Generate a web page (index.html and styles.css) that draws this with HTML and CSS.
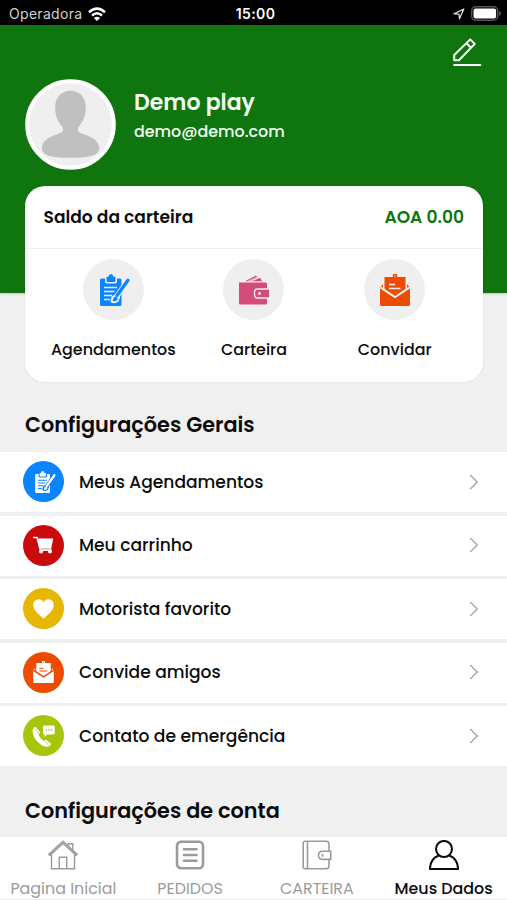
FILE: index.html
```html
<!DOCTYPE html>
<html lang="pt">
<head>
  <meta charset="UTF-8">
  <meta name="viewport" content="width=device-width, initial-scale=1.0">
  <title>Meus Dados</title>
  <link rel="stylesheet" href="styles.css">
</head>
<body>
  <!-- shared icons -->
  <svg class="sprite" width="0" height="0">
    <symbol id="icon-clipboard" viewBox="0 0 30 32">
      <path class="fill" d="M1.500 4.500h3.500v3.200q0 1.800 1.800 1.800h8.400q1.800 0 1.800-1.800V4.500h3q1.500 0 1.500 1.500v24.500q0 1.500-1.500 1.500H1.500Q0 32 0 30.500V6q0-1.500 1.500-1.500z"/>
      <path class="fill" d="M6.500 2.800h2Q9 0 11 0t2.500 2.800h2v4q0 1.200-1.200 1.200H7.700Q6.500 8 6.500 6.800z"/>
      <path class="hole-line" stroke-width="1.700" d="M4 13.500h13M4 17.500h10.500M4 21.500h8M4 25.500h6"/>
      <path class="hole-line" stroke-width="5.400" stroke-linecap="round" d="M27.800 6.500L16 23.500"/>
      <path class="hole-line" stroke-width="2" d="M16 21l-3.500 2-1 4.500q3.500 1.500 6-.5l1.500-3.500z"/>
      <path class="line" stroke-width="3.200" stroke-linecap="round" d="M28 6.200L17 21.500"/>
      <path class="fill" d="M15.500 22.500l2.500 2q-.5 2.500-5.500 2.500 1.500-1 1.200-2.500t1.800-2z"/>
    </symbol>
    <symbol id="icon-envelope" viewBox="0 0 30 32">
      <path class="fill" d="M4.500 3h8.300V.8q0-.8.800-.8h2.800q.8 0 .8.800V3h8.300v13.500L15 22.500 4.500 15.500z"/>
      <path class="fill" d="M3 10v5L.5 13.200zM27 10v5l2.500-1.800z"/>
      <path class="fill" d="M0 14.500l15 9.800 15-9.800v16q0 1.500-1.500 1.500h-27Q0 32 0 30.500z"/>
      <path class="hole-line" stroke-width="1.600" d="M1 13.500l14 9.300 14-9.300M9 10.500h6M9 14.500h11.500"/>
      <path class="hole-line" stroke-width="1" d="M14.300 2h1.400"/>
    </symbol>
    <symbol id="icon-chevron" viewBox="0 0 10 16">
      <path d="M1.200 1l7 7-7 7" fill="none" stroke="#a9a9a9" stroke-width="1.500"/>
    </symbol>
  </svg>

  <div class="status-bar">
    <div class="carrier">
      <span>Operadora</span>
      <svg width="18" height="14" viewBox="0 0 18 14" fill="none" stroke="#fff" stroke-width="2.500">
        <path d="M1 5.200Q9-2 17 5.200M4 8.500q5-4.400 10 0"/>
        <path d="M9 14l-3.100-3q3.100-2.500 6.200 0z" fill="#fff" stroke="none"/>
      </svg>
    </div>
    <div class="time">15:00</div>
    <div class="indicators">
      <svg width="12" height="12" viewBox="0 0 12 12" fill="none" stroke="#d8d8d8" stroke-width="1.300" stroke-linejoin="round">
        <path d="M1 5.800L10.800 1 6.500 10.800 6 6.200z"/>
      </svg>
      <svg width="31" height="15" viewBox="0 0 31 15">
        <rect x=".7" y=".7" width="26" height="13.600" rx="4" fill="none" stroke="#555" stroke-width="1.400"/>
        <rect x="2.500" y="2.500" width="22.600" height="10" rx="2" fill="#fff"/>
        <path d="M28 5q2 .6 2 2.500T28 10z" fill="#555"/>
      </svg>
    </div>
  </div>

  <header class="profile">
    <svg class="edit" width="29" height="29" viewBox="0 0 29 29" fill="none" stroke="#fff" stroke-width="2" stroke-linejoin="round" stroke-linecap="round">
      <path d="M1.200 22.300V17L17.200 1.400l4.600 4.500L6 22.300zM13.500 5.200l4.500 4.600"/>
      <path d="M1.200 27h26.200"/>
    </svg>
    <div class="user">
      <svg class="avatar" width="91" height="91" viewBox="0 0 92 92">
        <circle cx="46" cy="46" r="43.800" fill="#efefef" stroke="#fff" stroke-width="4"/>
        <path fill="#c0c0c0" d="M46 12c9 0 15.500 6.500 15.500 17 0 8-3 14.500-7 19-2 3-1 5.500 2 6.500 9 3.500 18 6.500 18.500 15 0 7.500-8 10.200-29 10.200s-29-2.700-29-10.200c.5-8.500 9.500-11.500 18.500-15 3-1 4-3.500 2-6.500-4-4.500-7-11-7-19C30.500 18.500 37 12 46 12z"/>
      </svg>
      <div class="user-info">
        <h1>Demo play</h1>
        <p>demo@demo.com</p>
      </div>
    </div>
  </header>

  <section class="wallet-card">
    <div class="balance">
      <span>Saldo da carteira</span>
      <span class="amount">AOA 0.00</span>
    </div>
    <div class="shortcuts">
      <div class="shortcut">
        <div class="circle blue"><svg class="clipboard" width="30" height="32"><use href="#icon-clipboard"/></svg></div>
        <span>Agendamentos</span>
      </div>
      <div class="shortcut">
        <div class="circle pink">
          <svg width="30" height="30" viewBox="0 0 30 30">
            <path class="fill" d="M6 6.300L16.500.8q.8-.3 1.200.4l.8 1.300L11 6.300zM13 6.300L20.500 3q.8-.3 1.200.5l1.300 2.800z"/>
            <path class="hole-line" stroke-width=".8" d="M8.500 6.500L18 2.300"/>
            <path class="fill" d="M0 7.500h26.500q1.500 0 1.500 1.500v19q0 1.500-1.500 1.500h-25Q0 29.500 0 28z"/>
            <rect x="15.500" y="14" width="15" height="9" rx="3" class="fill"/>
            <path class="hole-line" stroke-width="1.400" d="M28.500 14H18.500q-3 0-3 3v3q0 3 3 3h10"/>
            <circle cx="20.500" cy="18.500" r="1.500" class="hole"/>
          </svg>
        </div>
        <span>Carteira</span>
      </div>
      <div class="shortcut">
        <div class="circle orange"><svg width="30" height="32"><use href="#icon-envelope"/></svg></div>
        <span>Convidar</span>
      </div>
    </div>
  </section>

  <h2>Configurações Gerais</h2>
  <ul class="menu">
    <li>
      <div class="badge bg-blue"><svg class="clipboard" width="21" height="22"><use href="#icon-clipboard"/></svg></div>
      <span>Meus Agendamentos</span>
      <svg class="chevron" width="10" height="16"><use href="#icon-chevron"/></svg>
    </li>
    <li>
      <div class="badge bg-red">
        <svg width="21" height="18" viewBox="0 0 21 18">
          <path d="M.8 1.500h3.200l3 11.500h11" fill="none" stroke="#fff" stroke-width="1.500" stroke-linecap="round"/>
          <path class="fill" d="M4.300 2.500h16l-2 9.500H6.500z"/>
          <path d="M7.500 14.500h10" stroke="#fff" stroke-width="1"/>
          <circle cx="8" cy="15.500" r="2" class="fill"/>
          <circle cx="17" cy="15.500" r="2" class="fill"/>
        </svg>
      </div>
      <span>Meu carrinho</span>
      <svg class="chevron" width="10" height="16"><use href="#icon-chevron"/></svg>
    </li>
    <li>
      <div class="badge bg-yellow">
        <svg width="21" height="20" viewBox="0 0 21 20">
          <path class="fill" d="M10.500 19.800C7 16 .3 12 .3 6 .3 2.500 2.800.3 5.800.3c2.200 0 3.900 1.200 4.700 2.900C11.300 1.500 13 .3 15.200.3c3 0 5.500 2.200 5.500 5.700 0 6-6.700 10-10.200 13.800z"/>
        </svg>
      </div>
      <span>Motorista favorito</span>
      <svg class="chevron" width="10" height="16"><use href="#icon-chevron"/></svg>
    </li>
    <li>
      <div class="badge bg-orange"><svg width="21" height="22"><use href="#icon-envelope"/></svg></div>
      <span>Convide amigos</span>
      <svg class="chevron" width="10" height="16"><use href="#icon-chevron"/></svg>
    </li>
    <li>
      <div class="badge bg-lime">
        <svg width="23" height="22" viewBox="0 0 23 22">
          <path class="fill" d="M1.800 2.500Q3 1.500 4.200 2.600L8 7.200Q8 8.500 6.500 9.500q1.500 4 5 6.200 1.500-1 2.800-.6l4.700 3.700q.3 1.500-2.500 2.700Q11 23 4.500 15.500-1.500 8 1.800 2.500z"/>
          <path class="hole-line" stroke-width=".7" d="M2.800 3.500l4.500 6M12 15.500l5 5"/>
          <path class="fill" d="M12.500.5h8.800q1.400 0 1.400 1.400v6.200q0 1.400-1.400 1.400H15L12.500 12V9.500q-1.400 0-1.400-1.400V1.900q0-1.400 1.400-1.400z"/>
          <path class="hole-line" stroke-width="1.300" stroke-dasharray="1.300 1.300" d="M13.700 5h6.700"/>
        </svg>
      </div>
      <span>Contato de emergência</span>
      <svg class="chevron" width="10" height="16"><use href="#icon-chevron"/></svg>
    </li>
  </ul>
  <h2 class="account">Configurações de conta</h2>

  <nav class="tabs">
    <a class="tab">
      <svg width="30" height="30" viewBox="0 0 30 30" fill="none" stroke="currentColor" stroke-width="1.400">
        <path d="M3.500 14.500v14.300h23V14.500M.8 14.200L15 1.200l14.200 13-1.200 1L15 3.400 2 15.200z"/>
        <path d="M20.300 6V3.700h4.500V10M11.300 28.500V17.200h7.400v11.300"/>
      </svg>
      <span>Pagina Inicial</span>
    </a>
    <a class="tab">
      <svg width="30" height="30" viewBox="0 0 30 30" fill="none" stroke="currentColor" stroke-width="2.600">
        <rect x="2" y="1.800" width="26" height="26.400" rx="4"/>
        <path stroke-linecap="round" d="M9 9.300h12.500M9 15h12.500M9 20.700h12.500"/>
      </svg>
      <span>PEDIDOS</span>
    </a>
    <a class="tab">
      <svg width="30" height="30" viewBox="0 0 30 30" fill="none" stroke="currentColor" stroke-width="1.600">
        <path d="M27 11V4q0-2.700-2.700-2.700H3.200q-2 0-2 2v23.500q0 2 2 2h21.100q2.700 0 2.700-2.700v-6.300M5.500 1.300v27.500"/>
        <path d="M28.700 11.200h-8.200q-4 0-4 4.100t4 4.100h8.200z"/>
        <path d="M20.500 13.800v3"/>
      </svg>
      <span>CARTEIRA</span>
    </a>
    <a class="tab active">
      <svg width="30" height="30" viewBox="0 0 30 30" fill="none" stroke="currentColor" stroke-width="2.100">
        <circle cx="15" cy="9" r="8"/>
        <path stroke-linejoin="round" d="M9.800 15.500Q1.200 18.500 1 29h28q-.2-10.500-8.800-13.500"/>
      </svg>
      <span>Meus Dados</span>
    </a>
  </nav>
</body>
</html>
```
FILE: styles.css
```css
* {
  box-sizing: border-box;
}
body {
  margin: 0;
  height: 900px;
  overflow: hidden;
  display: flex;
  flex-direction: column;
  background: #f0f0f0;
  color: #0c0c0c;
  font-family: Poppins, Inter, sans-serif;
}
h1, h2, p, ul {
  margin: 0;
  padding: 0;
}
svg {
  display: block;
  flex-shrink: 0;
}
.sprite {
  position: absolute;
}
.fill {
  fill: currentColor;
}
.line {
  fill: none;
  stroke: currentColor;
}
.hole {
  fill: var(--hole);
}
.hole-line {
  fill: none;
  stroke: var(--hole);
}

/* status bar */
.status-bar {
  height: 25px;
  flex-shrink: 0;
  display: grid;
  grid-template-columns: 1fr auto 1fr;
  align-items: center;
  padding: 2px 5px 0 9px;
  background: #000;
  color: #fff;
  font-family: Inter, sans-serif;
  font-size: 14px;
}
.carrier {
  display: flex;
  align-items: center;
  gap: 6px;
  color: #d0d0d0;
  letter-spacing: 0.3px;
}
.time {
  font-weight: 600;
  letter-spacing: 0.4px;
}
.indicators {
  display: flex;
  justify-content: flex-end;
  align-items: center;
  gap: 6px;
}

/* green header */
.profile {
  height: 268px;
  flex-shrink: 0;
  padding: 13px 25px 0;
  background: #0e750f;
  box-shadow: 0 1px 2px rgba(0, 0, 0, 0.2);
}
.edit {
  margin-left: auto;
}
.user {
  display: flex;
  gap: 18px;
  margin-top: 12px;
  color: #f4fff4;
}
.user-info {
  padding-top: 9px;
}
.user-info h1 {
  font-size: 22px;
  line-height: 30px;
  font-weight: 600;
}
.user-info p {
  font-size: 15.9px;
  line-height: 28px;
  font-weight: 500;
}

/* balance card */
.wallet-card {
  position: relative;
  height: 196px;
  flex-shrink: 0;
  margin: -107px 24px 0 25px;
  background: #fff;
  border-radius: 20px;
  box-shadow: 0 0 2px rgba(0, 0, 0, 0.12);
}
.balance {
  display: flex;
  justify-content: space-between;
  align-items: center;
  height: 63px;
  padding: 0 19px 0 18.5px;
  border-bottom: 1px solid #eee;
  font-size: 17.1px;
  font-weight: 600;
}
.amount {
  color: #0e750f;
}
.shortcuts {
  display: grid;
  grid-template-columns: repeat(3, 1fr);
  padding: 10px 18px 0;
}
.shortcut {
  display: flex;
  flex-direction: column;
  align-items: center;
  gap: 18px;
  font-size: 15.9px;
  line-height: 24px;
  font-weight: 500;
}
.circle {
  width: 61px;
  height: 61px;
  display: flex;
  align-items: center;
  justify-content: center;
  border-radius: 50%;
  background: #efefef;
  --hole: #efefef;
}
.clipboard {
  margin-left: 3px;
}
.blue {
  color: #0a84ff;
}
.pink {
  color: #d34d7b;
}
.orange {
  color: #ec4b00;
}

/* settings */
h2 {
  height: 70px;
  flex-shrink: 0;
  padding: 28px 25px 0;
  font-size: 20.8px;
  line-height: 30px;
  font-weight: 600;
}
.menu {
  display: flex;
  flex-direction: column;
  gap: 3.5px;
  list-style: none;
}
.menu li {
  display: flex;
  align-items: center;
  height: 60px;
  padding: 0 28px 1px 23px;
  background: #fff;
  font-size: 17.1px;
  font-weight: 500;
}
.badge {
  width: 41px;
  height: 41px;
  margin-right: 15px;
  display: flex;
  align-items: center;
  justify-content: center;
  border-radius: 50%;
  color: #fff;
}
.bg-blue {
  background: #0a84ff;
  --hole: #0a84ff;
}
.bg-red {
  background: #ca0b0b;
}
.bg-yellow {
  background: #e6b600;
}
.bg-orange {
  background: #ec4b00;
  --hole: #ec4b00;
}
.bg-lime {
  background: #a5c60b;
  --hole: #a5c60b;
}
.chevron {
  margin-left: auto;
}
.account {
  padding-top: 30px;
}

/* bottom tabs */
.tabs {
  display: grid;
  grid-template-columns: repeat(4, 1fr);
  height: 63px;
  margin-top: auto;
  flex-shrink: 0;
  background: #fff;
  border-bottom: 1px solid #eee;
}
.tab {
  display: flex;
  flex-direction: column;
  align-items: center;
  gap: 6px;
  padding-top: 3px;
  color: #9b9b9b;
  font-size: 15.9px;
  line-height: 25px;
  white-space: nowrap;
}
.tab.active {
  color: #0c0c0c;
  font-weight: 500;
}
```
